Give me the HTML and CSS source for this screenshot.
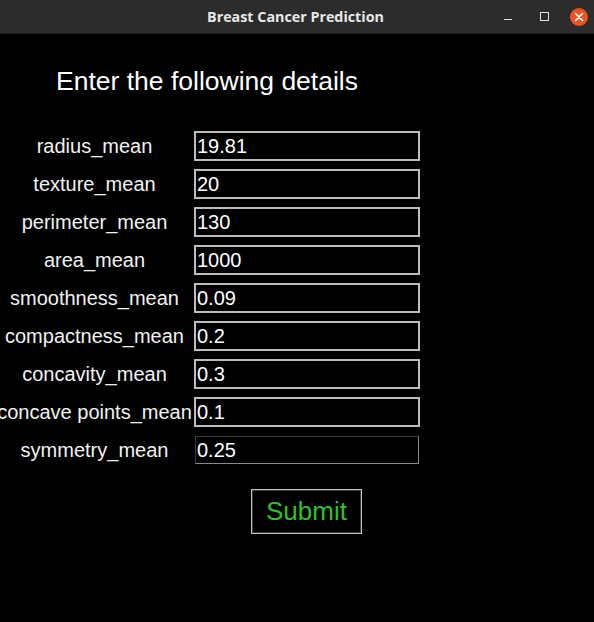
FILE: index.html
```html
<!DOCTYPE html>
<html lang="en">
<head>
  <meta charset="UTF-8" />
  <title>Breast Cancer Prediction</title>
  <link rel="stylesheet" href="styles.css">
</head>
<body>
  <header class="titlebar">
    <span class="title">Breast Cancer Prediction</span>
    <div class="controls">
      <span class="min"></span>
      <span class="max"></span>
      <span class="close">
        <svg width="10" height="10" viewBox="0 0 10 10"><path d="M1.5 1.5 L8.5 8.5 M8.5 1.5 L1.5 8.5" stroke="#fff" stroke-width="1.6" stroke-linecap="round"/></svg>
      </span>
    </div>
  </header>
  <main class="window">
    <h1 class="heading">Enter the following details</h1>
    <form class="fields">
      <label>radius_mean</label><input type="text" value="19.81" />
      <label>texture_mean</label><input type="text" value="20" />
      <label>perimeter_mean</label><input type="text" value="130" />
      <label>area_mean</label><input type="text" value="1000" />
      <label>smoothness_mean</label><input type="text" value="0.09" />
      <label>compactness_mean</label><input type="text" value="0.2" />
      <label>concavity_mean</label><input type="text" value="0.3" />
      <label>concave points_mean</label><input type="text" value="0.1" />
      <label>symmetry_mean</label><input type="text" class="sunken" value="0.25" />
    </form>
    <div class="actions">
      <button type="button">Submit</button>
    </div>
  </main>
</body>
</html>
```

FILE: styles.css
```css
body {
  margin: 0;
  background: #000000;
  font-family: 'Liberation Sans', Arial, sans-serif;
  color: #f2f2f2;
  width: 594px;
  height: 622px;
  overflow: hidden;
}
.titlebar {
  height: 33px;
  background: #2c2c2c;
  border-bottom: 1px solid #1a1a1a;
  display: flex;
  align-items: center;
  justify-content: center;
  position: relative;
}
.title {
  font-family: 'Open Sans', 'DejaVu Sans', sans-serif;
  font-weight: 700;
  font-size: 14.3px;
  color: #e8e8e8;
  margin-right: 3px;
}
.controls {
  position: absolute;
  right: 6px;
  top: 0;
  height: 33px;
  display: flex;
  align-items: center;
}
.min {
  width: 8px;
  height: 1px;
  background: #e0e0e0;
  margin-top: 6px;
  margin-right: 28px;
}
.max {
  width: 7px;
  height: 7px;
  border: 1px solid #e0e0e0;
  margin-right: 21px;
}
.close {
  width: 18px;
  height: 18px;
  border-radius: 50%;
  background: #e95420;
  display: flex;
  align-items: center;
  justify-content: center;
}
.heading {
  margin: 0;
  padding: 32px 0 0 56px;
  font-weight: 400;
  font-size: 26.5px;
  line-height: 30px;
  color: #ffffff;
}
.fields {
  display: grid;
  grid-template-columns: 189px 226px;
  grid-auto-rows: 30px;
  row-gap: 8px;
  column-gap: 5px;
  margin-top: 35px;
}
.fields label {
  font-size: 20px;
  line-height: 30px;
  text-align: center;
  white-space: nowrap;
  display: flex;
  justify-content: center;
}
.fields input {
  box-sizing: border-box;
  width: 226px;
  height: 30px;
  background: #000000;
  border: 2px solid #bdbdbd;
  color: #ffffff;
  font-family: 'Liberation Sans', Arial, sans-serif;
  font-size: 20px;
  padding: 0 1px;
  outline: none;
}
.fields input.sunken {
  border: 1px solid;
  border-color: #3a3a3a #8a8a8a #8a8a8a #3a3a3a;
  width: 224px;
  height: 28px;
  margin: 1px;
  padding: 0 1px;
}
.actions {
  padding-left: 251px;
  margin-top: 24px;
}
.actions button {
  width: 111px;
  height: 45px;
  background: #000000;
  border: 1px solid #c4c4c4;
  box-shadow: inset 0 0 0 1px #3a3a3a;
  color: #2dc22d;
  font-family: 'Liberation Sans', Arial, sans-serif;
  font-size: 26px;
  padding: 0;
}
```
